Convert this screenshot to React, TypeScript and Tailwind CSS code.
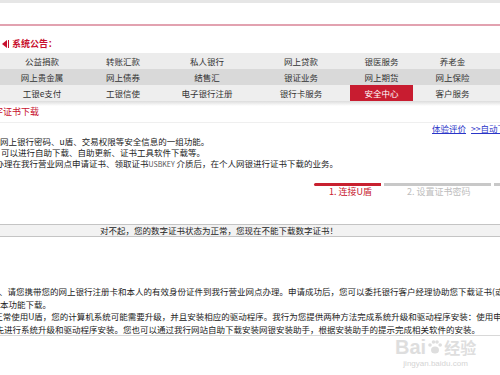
export default function App() {
  const navRows: string[][] = [
    ["公益捐款", "转账汇款", "私人银行", "网上贷款", "银医服务", "养老金"],
    ["网上贵金属", "网上债券", "结售汇", "银证业务", "网上期货", "网上保险"],
    ["工银e支付", "工银信使", "电子银行注册", "银行卡服务", "安全中心", "客户服务"],
  ];
  const rowBg = ["bg-[#ececec]", "bg-[#d9d9d9]", "bg-[#eeeeee]"];
  return (
    <div className="relative w-[500px] h-[375px] overflow-hidden bg-white text-[#333] font-['Noto_Sans_CJK_SC','Liberation_Sans',sans-serif]">
      <div className="h-[3px] bg-[#e6e6e6]" />
      <div className="h-[21px]" />
      <div className="h-[2px] bg-[#e2a2b0]" />

      <div className="mt-[12px] h-[12px] flex items-center pl-[2px] text-[9px] leading-[12px] font-bold text-[#c8102e] whitespace-nowrap">
        <span className="w-0 h-0 border-y-[4px] border-y-transparent border-r-[5px] border-r-[#c8102e]" />
        <span className="ml-[1px] w-[1px] h-[8px] bg-[#c8102e]" />
        <span className="ml-[3px]">系统公告：</span>
      </div>

      <div className="mt-[3px]">
        {navRows.map((row, ri) => (
          <div
            key={ri}
            className={`grid grid-cols-[84px_78px_90px_98px_63px_79px_1fr] h-[16px] text-[8.5px] leading-[16px] ${rowBg[ri]}`}
          >
            {row.map((t) => (
              <div
                key={t}
                className={
                  t === "安全中心"
                    ? "text-center text-white bg-[#c81c30] whitespace-nowrap"
                    : "text-center text-[#333] whitespace-nowrap"
                }
              >
                {t}
              </div>
            ))}
            <div />
          </div>
        ))}
      </div>
      <div className="h-[5px] bg-gradient-to-b from-[#dcdcdc] to-white" />

      <div className="h-[12px] leading-[12px] text-[9px] text-[#c8102e] whitespace-nowrap ml-[-15px]">
        数字证书下载
      </div>
      <div className="mt-[4px] h-[1px] bg-[#efefef]" />
      <div className="h-[10px] leading-[10px] text-[8.5px] whitespace-nowrap pl-[432px] flex gap-[5px]">
        <span className="text-[#2a35c8] underline">体验评价</span>
        <span className="text-[#2a35c8] underline">&gt;&gt;自动下载证书</span>
      </div>

      <div className="mt-[3px] text-[8.5px] leading-[11px] text-[#222] whitespace-nowrap">
        <div className="ml-[0px]">网上银行密码、u盾、交易权限等安全信息的一组功能。</div>
        <div className="ml-[1px]">可以进行自助下载、自助更新、证书工具软件下载等。</div>
        <div className="ml-[-4.5px]">
          办理在我行营业网点申请证书、领取证书<span className="text-[7px] text-[#555]">USBKEY</span> 介质后，在个人网银进行证书下载的业务。
        </div>
      </div>

      <div className="mt-[13px] flex h-[3px] pl-[314px]">
        <div className="w-[67px] h-[3px] bg-[#c8202f] rounded-l-[2px]" />
        <div className="ml-[3px] w-[107px] h-[3px] bg-[#c8c8c8]" />
        <div className="ml-[3px] flex-1 h-[3px] bg-[#c8c8c8]" />
      </div>
      <div className="flex h-[12px] leading-[12px] text-[9px] whitespace-nowrap pl-[329px]">
        <span className="w-[78px] text-[#c8202f]">1. 连接U盾</span>
        <span className="text-[#bdbdbd]">2. 设置证书密码</span>
      </div>

      <div className="mt-[26px] h-[13px] border-y border-[#c4c4c4] bg-[#f2f2f2] text-[8.5px] leading-[11px] pl-[100px] whitespace-nowrap text-[#222]">
        对不起，您的数字证书状态为正常，您现在不能下载数字证书！
      </div>

      <div className="mt-[48px] text-[8.5px] leading-[12.6px] text-[#222] whitespace-nowrap border-b border-[#d8d8d8]">
        <div className="ml-[-1px]">、请您携带您的网上银行注册卡和本人的有效身份证件到我行营业网点办理。申请成功后，您可以委托银行客户经理协助您下载证书(或通过</div>
        <div>本功能下载。</div>
        <div className="ml-[-5.8px]">正常使用U盾，您的计算机系统可能需要升级，并且安装相应的驱动程序。我行为您提供两种方法完成系统升级和驱动程序安装：使用申请</div>
        <div className="ml-[-4.5px]">先进行系统升级和驱动程序安装。您也可以通过我行网站自助下载安装网银安装助手，根据安装助手的提示完成相关软件的安装。</div>
      </div>

      <div className="absolute left-[395px] top-[337px] flex flex-col items-center text-[#dedede] pointer-events-none">
        <div className="flex items-end font-['Liberation_Sans',sans-serif] font-bold text-[20px] leading-[20px]">
          <span>Bai</span>
          <svg width="16" height="16" viewBox="0 0 16 16" className="mx-[1px] mb-[2px]">
            <ellipse cx="8" cy="11" rx="4" ry="3.5" fill="#dedede" />
            <circle cx="3" cy="6" r="1.8" fill="#dedede" />
            <circle cx="6.5" cy="3" r="1.8" fill="#dedede" />
            <circle cx="10" cy="3" r="1.8" fill="#dedede" />
            <circle cx="13.2" cy="6" r="1.8" fill="#dedede" />
          </svg>
          <span className="text-[16px] font-['Noto_Sans_CJK_SC',sans-serif]">经验</span>
        </div>
        <div className="mt-[2px] text-[8px] leading-[9px] font-['Liberation_Sans',sans-serif] text-[#d4d4d4]">jingyan.baidu.com</div>
      </div>
    </div>
  );
}
